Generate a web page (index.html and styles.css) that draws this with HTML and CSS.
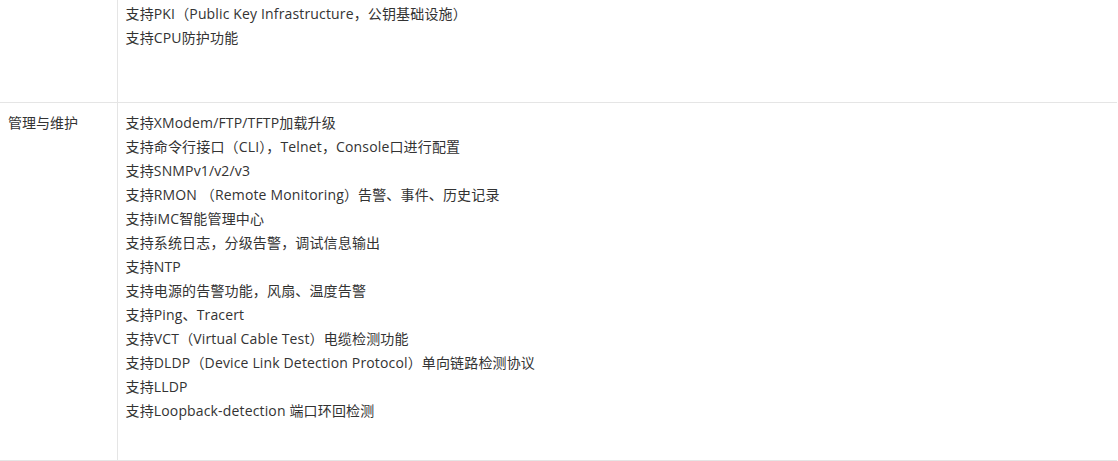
FILE: index.html
```html
<!DOCTYPE html>
<html lang="zh-CN">
<head>
<meta charset="utf-8">
<title>规格</title>
<link rel="stylesheet" href="styles.css">
</head>
<body>
<table class="spec">
  <colgroup>
    <col class="col-label">
    <col class="col-value">
  </colgroup>
  <tr class="row row-top">
    <td class="label"></td>
    <td class="value">
      <div class="line">支持PKI（Public Key Infrastructure，公钥基础设施）</div>
      <div class="line">支持CPU防护功能</div>
    </td>
  </tr>
  <tr class="row row-main">
    <td class="label">管理与维护</td>
    <td class="value">
      <div class="line">支持XModem/FTP/TFTP加载升级</div>
      <div class="line">支持命令行接口（CLI），Telnet，Console口进行配置</div>
      <div class="line">支持SNMPv1/v2/v3</div>
      <div class="line">支持RMON （Remote Monitoring）告警、事件、历史记录</div>
      <div class="line">支持iMC智能管理中心</div>
      <div class="line">支持系统日志，分级告警，调试信息输出</div>
      <div class="line">支持NTP</div>
      <div class="line">支持电源的告警功能，风扇、温度告警</div>
      <div class="line">支持Ping、Tracert</div>
      <div class="line">支持VCT（Virtual Cable Test）电缆检测功能</div>
      <div class="line">支持DLDP（Device Link Detection Protocol）单向链路检测协议</div>
      <div class="line">支持LLDP</div>
      <div class="line">支持Loopback-detection 端口环回检测</div>
    </td>
  </tr>
</table>
</body>
</html>
```
FILE: styles.css
```css
html, body {
  margin: 0;
  padding: 0;
  background: #ffffff;
}
body {
  font-family: "Open Sans", "Noto Sans CJK SC", sans-serif;
  font-size: 14px;
  color: #333333;
}
.spec {
  width: 1117px;
  border-collapse: collapse;
  table-layout: fixed;
}
.col-label {
  width: 117px;
}
.spec td {
  vertical-align: top;
  padding: 0 8px;
  line-height: 24px;
}
.spec .label {
  border-right: 1px solid #e5e5e5;
}
.row {
  border-bottom: 1px solid #e5e5e5;
}
.row-top td {
  padding-top: 2px;
  height: 102px;
  box-sizing: border-box;
}
.row-main td {
  padding-top: 8px;
  padding-bottom: 37px;
}
.line {
  white-space: nowrap;
  letter-spacing: 0.15px;
}
```
